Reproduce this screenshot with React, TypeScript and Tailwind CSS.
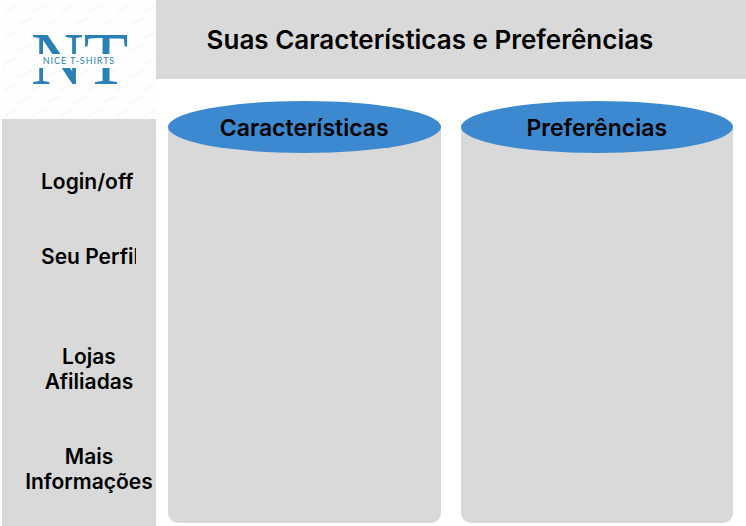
function Logo() {
  return (
    <svg viewBox="0 0 154 119" className="h-full w-full" role="img" aria-label="NT Nice T-Shirts">
      <defs>
        <pattern id="dashes" width="28" height="26" patternUnits="userSpaceOnUse">
          <path d="M2 12 L16 5 M16 25 L30 18 M-12 25 L2 18" fill="none" stroke="#f2f2f2" strokeWidth="1" />
        </pattern>
      </defs>
      <rect width="154" height="119" fill="#fefefe" />
      <rect width="154" height="119" fill="url(#dashes)" />
      <text x="29" y="84" fontSize="73" fill="#2980b5" className="font-['Liberation_Serif',serif]">
        NT
      </text>
      <rect x="28" y="54" width="98" height="14" fill="#fefefe" />
      <text x="77" y="64" fontSize="9" textAnchor="middle" fill="#2980b5" className="font-['Lato',sans-serif] tracking-widest">
        NICE T-SHIRTS
      </text>
    </svg>
  );
}

function Panel({ title }: { title: string }) {
  return (
    <section className="flex flex-1 flex-col rounded-b-[10px] bg-[linear-gradient(to_bottom,transparent_26px,#d9d9d9_26px)]">
      <h2 className="flex h-[52px] items-center justify-center rounded-[50%] bg-[#3d89d0] pt-0.5 text-[23px] font-semibold [font-optical-sizing:none]">
        {title}
      </h2>
    </section>
  );
}

export default function App() {
  return (
    <div className="flex min-h-screen bg-white pl-0.5 font-['Inter',sans-serif] text-black">
      <aside className="flex w-[154px] shrink-0 flex-col bg-[#d9d9d9]">
        <div className="h-[119px]">
          <Logo />
        </div>
        <nav className="flex flex-col pt-[50px] pl-5 text-center text-[21px] leading-[25px] font-semibold">
          <a href="#login" className="ml-[19px] self-start">
            Login/off
          </a>
          <a href="#perfil" className="mt-[50px] ml-[19px] w-[95px] self-start overflow-hidden text-left whitespace-nowrap">
            Seu Perfil
          </a>
          <a href="#lojas" className="mt-[75px]">
            Lojas
            <br />
            Afiliadas
          </a>
          <a href="#informacoes" className="mt-[50px]">
            Mais
            <br />
            Informações
          </a>
        </nav>
      </aside>
      <div className="flex flex-1 flex-col">
        <header className="flex h-[79px] items-center justify-center bg-[#d9d9d9] pr-[42px]">
          <h1 className="text-[26px] font-semibold whitespace-nowrap">Suas Características e Preferências</h1>
        </header>
        <main className="flex flex-1 gap-5 pt-[22px] pr-[13px] pb-[3px] pl-3">
          <Panel title="Características" />
          <Panel title="Preferências" />
        </main>
      </div>
    </div>
  );
}
